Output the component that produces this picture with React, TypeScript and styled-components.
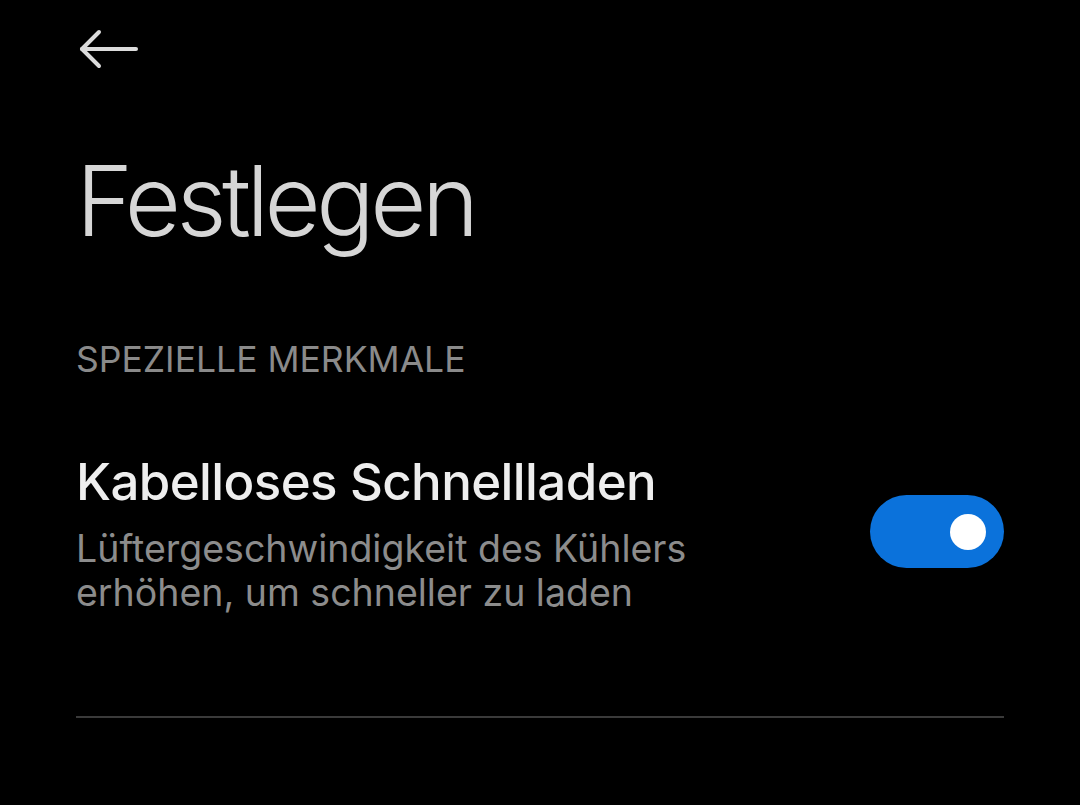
import { FC } from 'react';
import styled, { createGlobalStyle } from 'styled-components';

const GlobalStyle = createGlobalStyle`
  html, body {
    margin: 0;
    padding: 0;
    background: #000;
  }
  body {
    font-family: Inter, 'Noto Sans', sans-serif;
    -webkit-font-smoothing: antialiased;
  }
`;

const Screen = styled.div`
  width: 1080px;
  height: 805px;
  background: #000;
  box-sizing: border-box;
  padding: 0 76px;
  overflow: hidden;
`;

const TopBar = styled.div`
  height: 111px;
  display: flex;
  align-items: flex-start;
  padding-top: 28px;
  box-sizing: border-box;
`;

const BackButton = styled.button`
  background: none;
  border: 0;
  padding: 0;
  margin-left: 2px;
  width: 62px;
  height: 42px;
  color: #dcdcdc;
  display: flex;
`;

const Title = styled.h1`
  margin: 0;
  font-size: 97px;
  font-weight: 300;
  line-height: 180px;
  color: #d6d6d6;
  letter-spacing: -4.5px;
`;

const SectionLabel = styled.div`
  margin-top: 45px;
  font-size: 35.5px;
  font-weight: 400;
  line-height: 48px;
  color: #8a8a8a;
`;

const Row = styled.div`
  margin-top: 67px;
  display: flex;
  align-items: flex-start;
  gap: 40px;
  padding-bottom: 101px;
  border-bottom: 2px solid #3a3a3a;
`;

const RowText = styled.div`
  flex: 1;
  display: flex;
  flex-direction: column;
`;

const RowTitle = styled.div`
  font-size: 51px;
  font-weight: 500;
  line-height: 62px;
  color: #eeeeee;
  letter-spacing: -0.6px;
`;

const RowSub = styled.div`
  margin-top: 14px;
  font-size: 37.5px;
  font-weight: 400;
  line-height: 44px;
  color: #8c8c8c;
  max-width: 640px;
`;

const Switch = styled.div<{ $on: boolean }>`
  margin-top: 44px;
  width: 134px;
  height: 73px;
  border-radius: 37px;
  background: ${(p) => (p.$on ? '#0b72db' : '#444')};
  display: flex;
  align-items: center;
  justify-content: ${(p) => (p.$on ? 'flex-end' : 'flex-start')};
  padding: 0 18px;
  box-sizing: border-box;
  flex-shrink: 0;
`;

const Knob = styled.div`
  width: 36px;
  height: 36px;
  border-radius: 50%;
  background: #fff;
`;

const App: FC = () => {
  return (
    <Screen>
      <GlobalStyle />
      <TopBar>
        <BackButton aria-label='Zurück'>
          <svg width='62' height='42' viewBox='0 0 62 42' fill='none' stroke='currentColor' strokeWidth='4' strokeLinecap='round' strokeLinejoin='round'>
            <line x1='4' y1='21' x2='58' y2='21' />
            <polyline points='21,4 4,21 21,38' />
          </svg>
        </BackButton>
      </TopBar>
      <Title>Festlegen</Title>
      <SectionLabel>SPEZIELLE MERKMALE</SectionLabel>
      <Row>
        <RowText>
          <RowTitle>Kabelloses Schnellladen</RowTitle>
          <RowSub>Lüftergeschwindigkeit des Kühlers erhöhen, um schneller zu laden</RowSub>
        </RowText>
        <Switch $on>
          <Knob />
        </Switch>
      </Row>
    </Screen>
  );
};

export default App;
